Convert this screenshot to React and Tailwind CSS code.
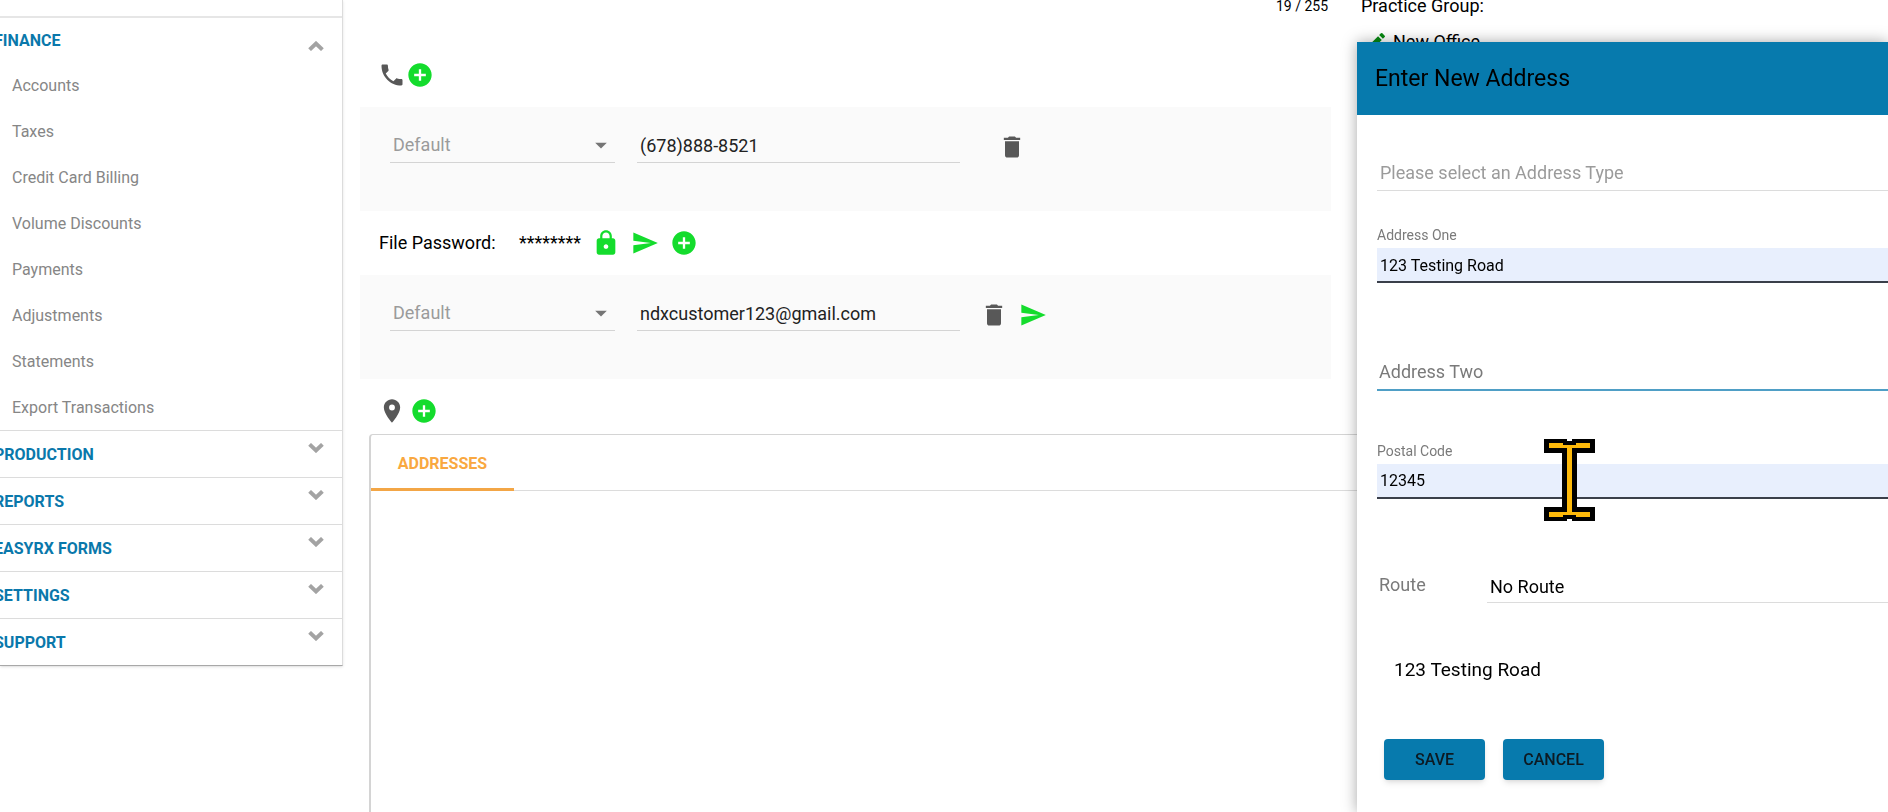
import React, { useState } from "react";
import {
  MdPhone,
  MdAddCircle,
  MdDelete,
  MdLock,
  MdSend,
  MdLocationOn,
  MdArrowDropDown,
  MdEdit,
} from "react-icons/md";

const financeLinks = [
  "Accounts",
  "Taxes",
  "Credit Card Billing",
  "Volume Discounts",
  "Payments",
  "Adjustments",
  "Statements",
  "Export Transactions",
];

const sections = ["PRODUCTION", "REPORTS", "EASYRX FORMS", "SETTINGS", "SUPPORT"];

const Chevron = ({ up }) => (
  <svg width="16" height="10" viewBox="0 0 16 10" fill="none" stroke="#a3a3a3" strokeWidth="4">
    {up ? <path d="M1.6 8.6 8 2.6l6.4 6" /> : <path d="M1.6 1.4 8 7.4l6.4-6" />}
  </svg>
);

const IconButton = ({ label, children, className = "text-[#14dc2d]" }) => (
  <button type="button" aria-label={label} className={className}>
    {children}
  </button>
);

const Sidebar = () => (
  <nav className="w-[343px] shrink-0 self-start border-r border-b border-r-[#dcdcdc] border-b-[#a8a8a8] shadow-sm">
    <div className="box-content h-4 border-b-2 border-[#e6e6e6]" />
    <button type="button" className="-ml-[6px] flex h-11 w-[348px] items-center justify-between pr-[18px] pt-0.5">
      <span className="font-bold text-[#0a78ab]">FINANCE</span>
      <span className="pt-2.5">
        <Chevron up />
      </span>
    </button>
    <ul>
      {financeLinks.map((name) => (
        <li key={name}>
          <a href="#" className="flex h-[46px] items-center pl-3 pt-0.5 text-[#868686]">
            {name}
          </a>
        </li>
      ))}
    </ul>
    {sections.map((name) => (
      <div key={name} className="border-t border-[#dcdcdc]">
        <button type="button" className="-ml-[6px] flex h-[46px] w-[348px] items-center justify-between pr-[18px] pt-px">
          <span className="font-bold text-[#0a78ab]">{name}</span>
          <span className="pb-3.5">
            <Chevron />
          </span>
        </button>
      </div>
    ))}
  </nav>
);

const ContactRow = ({ id, value, onChange, children }) => (
  <div className="flex h-[104px] bg-[#fafafa] pl-[30px] pt-5">
    <div className="relative h-9 w-[225px]">
      <select
        aria-label={`${id} type`}
        className="h-full w-full appearance-none border-b border-[#d4d4d4] pl-[3px] text-lg text-[#9b9b9b]"
      >
        <option>Default</option>
      </select>
      <MdArrowDropDown size={28} className="pointer-events-none absolute right-0 top-1 text-[#757575]" />
    </div>
    <input
      aria-label={id}
      value={value}
      onChange={(e) => onChange(e.target.value)}
      className="ml-[22px] h-9 w-[323px] border-b border-[#d4d4d4] pl-[3px] pt-px text-lg text-[#222]"
    />
    {children}
  </div>
);

const AddressDialog = () => {
  const [form, setForm] = useState({ one: "123 Testing Road", two: "", postal: "12345" });

  const handleChange = (e) => {
    setForm({ ...form, [e.target.name]: e.target.value });
  };

  return (
    <div
      role="dialog"
      aria-labelledby="dialog-title"
      className="fixed bottom-0 right-0 top-[42px] w-[531px] bg-white shadow-[0_0_14px_rgba(0,0,0,0.35)]"
    >
      <div className="flex h-[73px] items-center bg-[#077aad] pl-[18px] pt-0.5">
        <h2 id="dialog-title" className="text-[23px]">
          Enter New Address
        </h2>
      </div>
      <form className="pl-5 pt-10" onSubmit={(e) => e.preventDefault()}>
        <select
          aria-label="Address type"
          className="block h-9 w-full appearance-none border-b border-[#dcdcdc] pl-[3px] text-lg text-[#9b9b9b]"
        >
          <option>Please select an Address Type</option>
        </select>

        <label htmlFor="one" className="mt-[34px] block text-sm leading-5 text-[#7a7a7a]">
          Address One
        </label>
        <input
          id="one"
          name="one"
          value={form.one}
          onChange={handleChange}
          className="mt-[3px] block h-[35px] w-full border-b-2 border-[#3a3f4a] bg-[#e8effd] pl-[3px] pt-0.5 text-base"
        />

        <input
          name="two"
          aria-label="Address Two"
          placeholder="Address Two"
          value={form.two}
          onChange={handleChange}
          className="mt-[71px] block h-[37px] w-full border-b-2 border-[#4f9fc6] pl-[2px] text-lg placeholder:text-[#7a7a7a]"
        />

        <label htmlFor="postal" className="mt-[50px] block text-sm leading-5 text-[#7a7a7a]">
          Postal Code
        </label>
        <input
          id="postal"
          name="postal"
          value={form.postal}
          onChange={handleChange}
          className="mt-[3px] block h-[35px] w-full border-b-2 border-[#3a3f4a] bg-[#e8effd] pl-[3px] text-base"
        />

        <div className="mt-[68px] flex">
          <label htmlFor="route" className="w-[110px] pl-[2px] pt-1 text-lg text-[#7a7a7a]">
            Route
          </label>
          <select id="route" className="h-9 flex-1 appearance-none border-b border-[#dcdcdc] pl-[3px] pt-1 text-lg">
            <option>No Route</option>
          </select>
        </div>

        <p className="mt-[53px] pl-[17px] text-[19px] leading-7">{form.one}</p>

        <div className="mt-[55px] flex gap-[18px] pl-[7px]">
          <button type="submit" className="h-[41px] w-[101px] rounded bg-[#077aad] font-medium text-[#0d1a22] shadow-md">
            SAVE
          </button>
          <button type="button" className="h-[41px] w-[101px] rounded bg-[#077aad] font-medium text-[#0d1a22] shadow-md">
            CANCEL
          </button>
        </div>
      </form>
    </div>
  );
};

// Large text cursor used while presenting
const TextCursor = () => (
  <svg className="pointer-events-none fixed right-[293px] top-[438px]" width="51" height="84" viewBox="0 0 51 84">
    <path d="M0 1h23v2h5V1h23v14H33v54h18v14H28v-2h-5v2H0V69h18V15H0z" fill="#000" />
    <path d="M5 5h14v2h13V5h14v5H28v64h18v5H32v-2H19v2H5v-5h18V10H5z" fill="#fdb90b" />
  </svg>
);

const App = () => {
  const [phone, setPhone] = useState("(678)888-8521");
  const [email, setEmail] = useState("ndxcustomer123@gmail.com");

  return (
    <div className="flex h-screen overflow-hidden bg-white font-[Roboto,sans-serif] text-base text-black">
      <Sidebar />

      <main className="ml-[17px] flex min-w-0 flex-1 flex-col">
        <div className="flex h-[61px]">
          <div className="flex-1 pr-[33px] text-right text-sm leading-[12px]">19 / 255</div>
          <div className="w-[527px]">
            <p className="h-3 text-lg leading-[12px]">Practice Group:</p>
            <p className="mt-[18px] flex items-center pl-[3px] text-lg leading-6">
              <MdEdit size={24} className="mr-[5px] text-[#078a12]" />
              New Office
            </p>
          </div>
        </div>

        <div className="flex h-[46px] pl-[18px]">
          <MdPhone size={28} className="text-[#585858]" />
          <IconButton label="Add phone" className="h-7 text-[#14dc2d]">
            <MdAddCircle size={28} />
          </IconButton>
        </div>

        <div className="mr-[557px]">
          <ContactRow id="phone" value={phone} onChange={setPhone}>
            <IconButton label="Delete phone" className="ml-[38px] h-9 pt-1 text-[#585858]">
              <MdDelete size={28} />
            </IconButton>
          </ContactRow>

          <div className="flex h-16 items-center pl-[19px] text-lg">
            <span className="w-[140px]">File Password:</span>
            <span className="w-[73px]">********</span>
            <div className="flex gap-[11px]">
              <IconButton label="Lock">
                <MdLock size={28} />
              </IconButton>
              <IconButton label="Send password">
                <MdSend size={28} />
              </IconButton>
              <IconButton label="Add email">
                <MdAddCircle size={28} />
              </IconButton>
            </div>
          </div>

          <ContactRow id="email" value={email} onChange={setEmail}>
            <div className="ml-5 flex h-9 gap-[11px] pt-1">
              <IconButton label="Delete email" className="text-[#585858]">
                <MdDelete size={28} />
              </IconButton>
              <IconButton label="Send email">
                <MdSend size={28} />
              </IconButton>
            </div>
          </ContactRow>
        </div>

        <div className="flex h-[55px] items-center gap-1 pl-[18px] pt-2">
          <MdLocationOn size={28} className="text-[#585858]" />
          <IconButton label="Add address">
            <MdAddCircle size={28} />
          </IconButton>
        </div>

        <section className="ml-[9px] flex-1 rounded-tl border-l-2 border-t border-[#d4d4d4]">
          <div className="flex h-14 border-b border-[#dcdcdc]">
            <button
              type="button"
              className="h-14 w-[143px] border-b-[3px] border-[#f3a646] pt-1 font-bold text-[#f9a840]"
            >
              ADDRESSES
            </button>
          </div>
        </section>
      </main>

      <AddressDialog />
      <TextCursor />
    </div>
  );
};

export default App;
